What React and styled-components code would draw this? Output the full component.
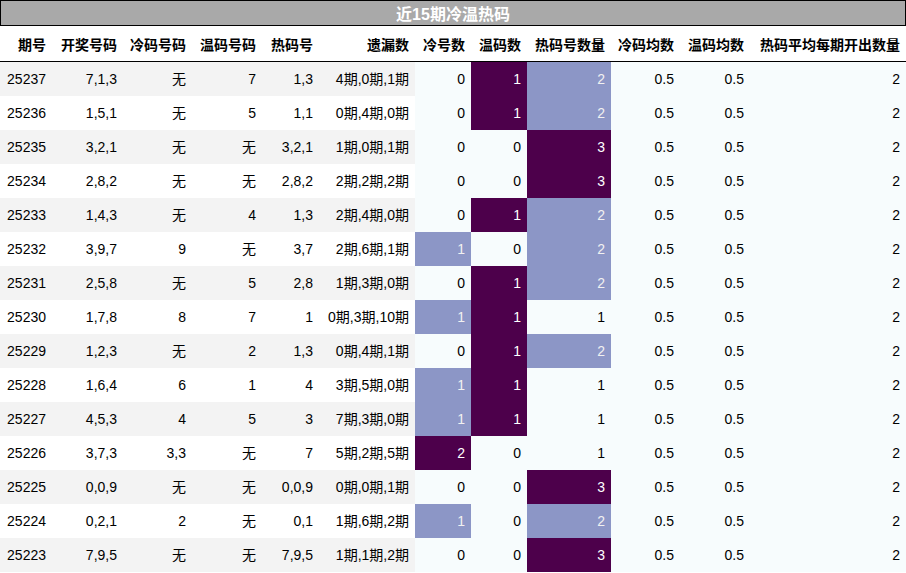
import React from "react";
import styled, { createGlobalStyle } from "styled-components";

const GlobalStyle = createGlobalStyle`
  html, body {
    margin: 0;
    padding: 0;
    background: #fff;
  }
  body {
    font-family: "Liberation Sans", "Noto Sans CJK SC", sans-serif;
    color: #000;
  }
`;

const COLS = "52px 71px 69px 70px 57px 96px 56px 56px 84px 69px 70px 156px";

const Page = styled.div`
  width: 906px;
  display: flex;
  flex-direction: column;
`;

const TitleBar = styled.div`
  height: 24px;
  border: 1px solid #000;
  background: #a9a9a9;
  color: #fff;
  font-size: 16px;
  font-weight: 700;
  display: flex;
  align-items: center;
  justify-content: center;
`;

const HeaderRow = styled.div`
  display: grid;
  grid-template-columns: ${COLS};
  height: 35px;
  border-bottom: 1px solid #000;
`;

const HeaderCell = styled.div`
  font-size: 14px;
  font-weight: 700;
  text-align: right;
  padding-right: 6px;
  line-height: 38px;
  white-space: nowrap;
`;

const Row = styled.div`
  display: grid;
  grid-template-columns: ${COLS};
  height: 34px;
`;

const Cell = styled.div`
  font-size: 14px;
  text-align: right;
  padding-right: 6px;
  line-height: 34px;
  white-space: nowrap;
  background: ${(p) => p.$bg || "transparent"};
  color: ${(p) => p.$fg || "#000"};
`;

const LIGHT = "#f7fcfd";
const MID = "#8c96c6";
const DARK = "#4d004b";

const heat = (v, low, high) => {
  if (v >= high) return { bg: DARK, fg: "#fff" };
  if (v > low) return { bg: MID, fg: "#f1f1f1" };
  return { bg: LIGHT, fg: "#000" };
};

const headers = [
  "期号", "开奖号码", "冷码号码", "温码号码", "热码号", "遗漏数",
  "冷号数", "温码数", "热码号数量", "冷码均数", "温码均数", "热码平均每期开出数量",
];

const rows = [
  [25237, "7,1,3", "无", "7", "1,3", "4期,0期,1期", 0, 1, 2],
  [25236, "1,5,1", "无", "5", "1,1", "0期,4期,0期", 0, 1, 2],
  [25235, "3,2,1", "无", "无", "3,2,1", "1期,0期,1期", 0, 0, 3],
  [25234, "2,8,2", "无", "无", "2,8,2", "2期,2期,2期", 0, 0, 3],
  [25233, "1,4,3", "无", "4", "1,3", "2期,4期,0期", 0, 1, 2],
  [25232, "3,9,7", "9", "无", "3,7", "2期,6期,1期", 1, 0, 2],
  [25231, "2,5,8", "无", "5", "2,8", "1期,3期,0期", 0, 1, 2],
  [25230, "1,7,8", "8", "7", "1", "0期,3期,10期", 1, 1, 1],
  [25229, "1,2,3", "无", "2", "1,3", "0期,4期,1期", 0, 1, 2],
  [25228, "1,6,4", "6", "1", "4", "3期,5期,0期", 1, 1, 1],
  [25227, "4,5,3", "4", "5", "3", "7期,3期,0期", 1, 1, 1],
  [25226, "3,7,3", "3,3", "无", "7", "5期,2期,5期", 2, 0, 1],
  [25225, "0,0,9", "无", "无", "0,0,9", "0期,0期,1期", 0, 0, 3],
  [25224, "0,2,1", "2", "无", "0,1", "1期,6期,2期", 1, 0, 2],
  [25223, "7,9,5", "无", "无", "7,9,5", "1期,1期,2期", 0, 0, 3],
];

export default function App() {
  return (
    <Page>
      <GlobalStyle />
      <TitleBar>近15期冷温热码</TitleBar>
      <HeaderRow>
        {headers.map((h) => (
          <HeaderCell key={h}>{h}</HeaderCell>
        ))}
      </HeaderRow>
      {rows.map((r, i) => {
        const stripe = i % 2 === 0 ? "#f3f3f3" : "#fff";
        const cold = heat(r[6], 0, 2);
        const warm = heat(r[7], 0, 1);
        const hot = heat(r[8], 1, 3);
        return (
          <Row key={r[0]}>
            {r.slice(0, 6).map((v, j) => (
              <Cell key={j} $bg={stripe}>{v}</Cell>
            ))}
            <Cell $bg={cold.bg} $fg={cold.fg}>{r[6]}</Cell>
            <Cell $bg={warm.bg} $fg={warm.fg}>{r[7]}</Cell>
            <Cell $bg={hot.bg} $fg={hot.fg}>{r[8]}</Cell>
            <Cell $bg={LIGHT}>0.5</Cell>
            <Cell $bg={LIGHT}>0.5</Cell>
            <Cell $bg={LIGHT}>2</Cell>
          </Row>
        );
      })}
    </Page>
  );
}
